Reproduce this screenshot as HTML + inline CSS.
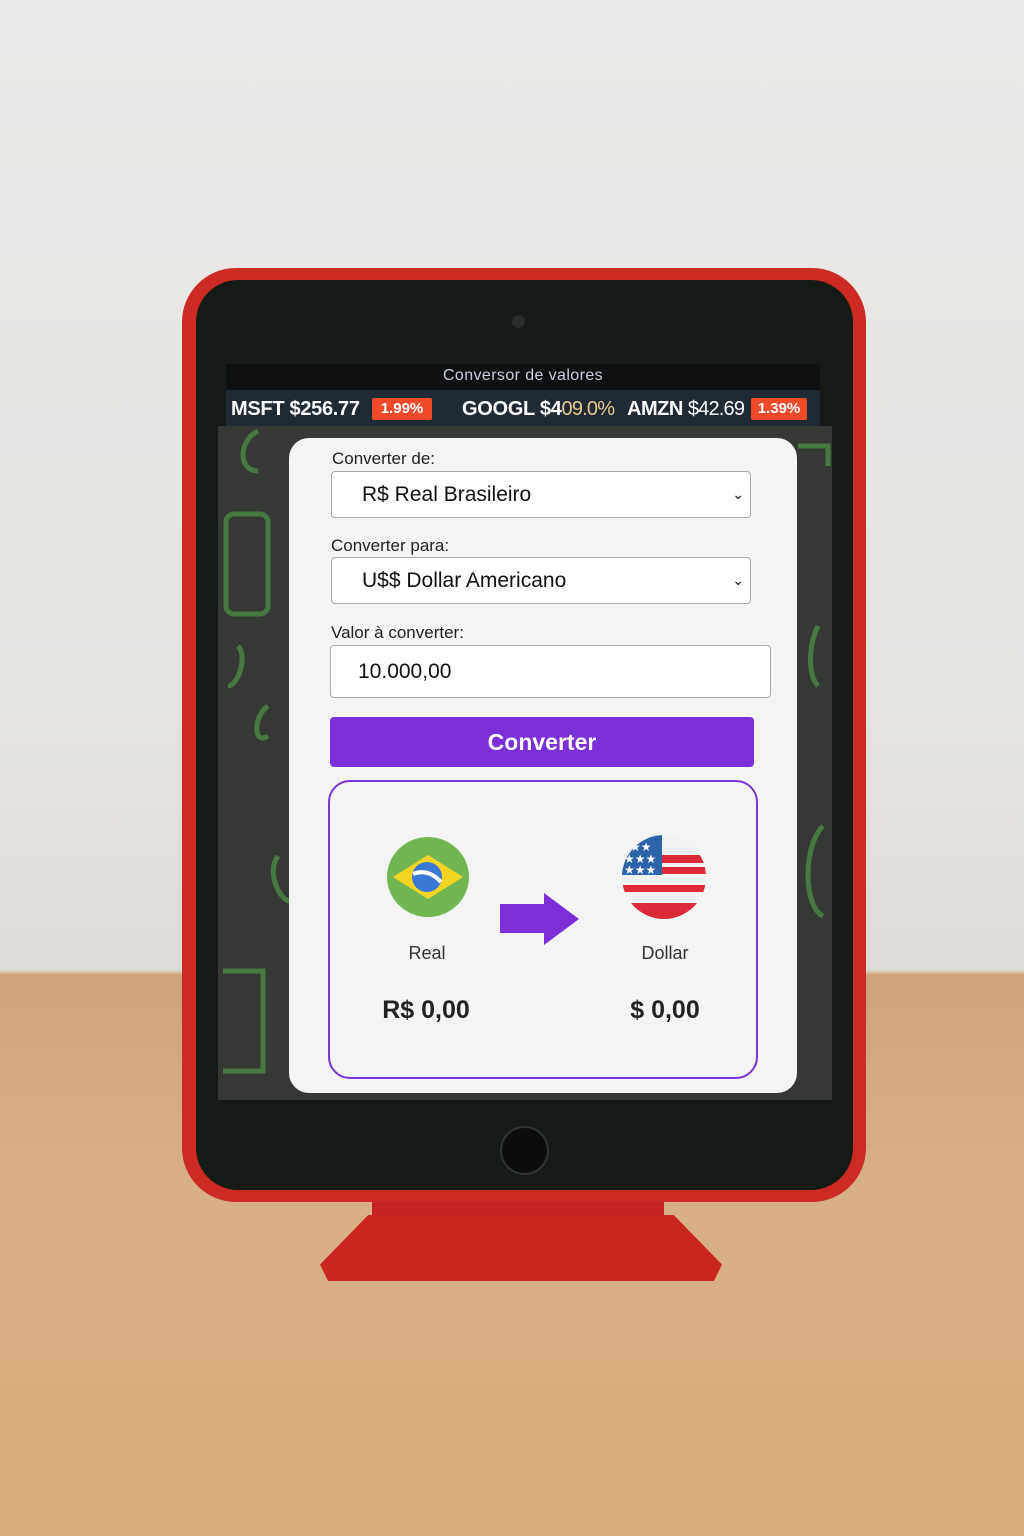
<!DOCTYPE html>
<html><head><meta charset="utf-8"><style>
*{margin:0;padding:0;box-sizing:border-box}
body{width:1024px;height:1536px;position:relative;overflow:hidden;font-family:"Liberation Sans",sans-serif;background:linear-gradient(#eceae8 0,#e6e4e1 700px,#dedad6 970px,#cfa577 975px,#d8b083 1200px,#d6ab7a 1536px)}
.a{position:absolute}
.lbl{position:absolute;font-size:17px;color:#222}
.sel{position:absolute;background:#fff;border:1.5px solid #aaa;border-radius:4px;font-size:21px;color:#111;padding-left:30px;display:flex;align-items:center}
</style></head><body>
<div class="a" style="left:372px;top:1185px;width:292px;height:40px;background:#c4231e"></div>
<div class="a" style="left:320px;top:1215px;width:402px;height:66px;background:#c9261f;clip-path:polygon(12% 0,88% 0,100% 75%,98% 100%,2% 100%,0 75%);"></div>
<div class="a" style="left:182px;top:268px;width:684px;height:934px;background:#cc2a22;border-radius:54px"></div>
<div class="a" style="left:196px;top:280px;width:657px;height:910px;background:#141a16;border-radius:42px"></div>
<div class="a" style="left:512px;top:315px;width:13px;height:13px;border-radius:50%;background:#2a2f2c"></div>
<div class="a" style="left:500px;top:1126px;width:49px;height:49px;border-radius:50%;background:#0b0d0c;border:2px solid #333"></div>
<div class="a" style="left:218px;top:426px;width:614px;height:674px;background:#363836"></div>
<svg class="a" style="left:218px;top:426px" width="614" height="674" fill="none" stroke="#4e8a45" stroke-width="5" opacity=".8">
<rect x="8" y="88" width="42" height="100" rx="8"/><path d="M20 220c10 10 0 40-10 40M50 280c-15 10-15 40 0 30M60 430c-15 20 10 60 20 40M40 5c-20 10-20 40 0 40M5 545h40v100H5"/>
<path d="M600 200c-10 20-10 50 0 60M605 400c-20 20-20 80 0 90M580 20h30v20"/></svg>
<div class="a" style="left:226px;top:364px;width:594px;height:26px;background:#0d0f10;color:#c8d0e0;font-size:16px;text-align:center;line-height:24px;letter-spacing:.4px">Conversor de valores</div>
<div class="a" style="left:226px;top:390px;width:594px;height:36px;background:#202a35;color:#fff;font-size:20px;font-weight:bold;line-height:38px;white-space:nowrap">
<span class="a" style="left:5px;letter-spacing:-.3px">MSFT $256.77</span>
<span class="a" style="left:146px;top:8px;width:60px;height:22px;background:#f04a2a;font-size:15px;line-height:22px;text-align:center;border-radius:2px">1.99%</span>
<span class="a" style="left:236px;letter-spacing:-.3px">GOOGL $4<span style="font-weight:normal;color:#e8c890;letter-spacing:-.8px">09.0%</span></span>
<span class="a" style="left:401px;letter-spacing:-.5px">AMZN <span style="font-weight:normal;letter-spacing:-.8px">$42.69</span></span>
<span class="a" style="left:525px;top:8px;width:56px;height:22px;background:#f04a2a;font-size:15px;line-height:22px;text-align:center;border-radius:2px">1.39%</span>
</div>
<div class="a" style="left:289px;top:438px;width:508px;height:655px;background:#f4f4f4;border-radius:20px"></div>
<div class="lbl" style="left:332px;top:449px">Converter de:</div>
<div class="sel" style="left:331px;top:471px;width:420px;height:47px">R$ Real Brasileiro<span class="a" style="right:6px;font-size:14px">⌄</span></div>
<div class="lbl" style="left:331px;top:536px">Converter para:</div>
<div class="sel" style="left:331px;top:557px;width:420px;height:47px">U$$ Dollar Americano<span class="a" style="right:6px;font-size:14px">⌄</span></div>
<div class="lbl" style="left:331px;top:623px">Valor à converter:</div>
<div class="sel" style="left:330px;top:645px;width:441px;height:53px;padding-left:27px">10.000,00</div>
<div class="a" style="left:330px;top:717px;width:424px;height:50px;background:#7b2fd9;border-radius:4px;color:#fff;font-size:23px;font-weight:bold;text-align:center;line-height:50px">Converter</div>
<div class="a" style="left:328px;top:780px;width:430px;height:299px;border:2px solid #7a35d8;border-radius:22px"></div>
<svg class="a" style="left:386px;top:837px" width="84" height="80"><ellipse cx="42" cy="40" rx="41" ry="40" fill="#72b553"/><path d="M7 40L42 18L77 40L42 62Z" fill="#f5d523"/><circle cx="41" cy="40" r="15" fill="#3a78d6"/><path d="M27 37q15-6 28 8" stroke="#fff" stroke-width="4" fill="none"/></svg>
<svg class="a" style="left:622px;top:835px" width="86" height="84"><defs><clipPath id="c"><circle cx="42" cy="42" r="42"/></clipPath></defs><g clip-path="url(#c)"><rect width="86" height="84" fill="#f2f2f2"/><rect y="20" width="86" height="8" fill="#dd2a38"/><rect y="32" width="86" height="7" fill="#dd2a38"/><rect y="50" width="86" height="7" fill="#dd2a38"/><rect y="68" width="86" height="16" fill="#dd2a38"/><rect width="40" height="40" fill="#2b64a8"/><g fill="#fff" font-size="12"><text x="8" y="16">★★</text><text x="2" y="28">★★★</text><text x="2" y="39">★★★</text></g></g></svg>
<svg class="a" style="left:500px;top:893px" width="80" height="53"><path d="M0 11H44V0L79 26L44 52V40H0Z" fill="#7b2fd9"/></svg>
<div class="a" style="left:380px;top:943px;width:94px;text-align:center;font-size:18px;color:#333">Real</div>
<div class="a" style="left:620px;top:943px;width:90px;text-align:center;font-size:18px;color:#333">Dollar</div>
<div class="a" style="left:360px;top:996px;width:132px;text-align:center;font-size:25px;font-weight:bold;color:#222">R$ 0,00</div>
<div class="a" style="left:610px;top:996px;width:110px;text-align:center;font-size:25px;font-weight:bold;color:#222">$ 0,00</div>
</body></html>
